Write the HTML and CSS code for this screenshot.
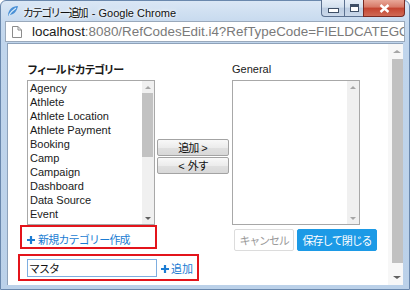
FILE: index.html
```html
<!DOCTYPE html>
<html lang="ja">
<head>
  <meta charset="UTF-8">
  <meta name="viewport" content="width=device-width, initial-scale=1.0">
  <title>カテゴリー追加</title>
  <link rel="stylesheet" href="styles.css">
</head>
<body>
  <div class="window">
    <div class="titlebar">
      <svg class="app-icon" width="13" height="13" viewBox="0 0 13 13">
        <path d="M2 11 C2 5 6 1 12 1 C11 6 8 10 3 10 Z" fill="#4a90d6"/>
        <path d="M3 10 C5 7 7 5 10 3" stroke="#d8ecfb" stroke-width="1.2" fill="none"/>
      </svg>
      <span class="title"><span class="ja title-ja">カテゴリー追加</span> - Google Chrome</span>
      <div class="controls">
        <div class="ctl ctl-min"><span class="glyph-min"></span></div>
        <div class="ctl ctl-max"><span class="glyph-max"></span></div>
        <div class="ctl ctl-close">
          <svg width="11" height="9" viewBox="0 0 11 9">
            <path d="M1.5 1 L9.5 8 M9.5 1 L1.5 8" stroke="#fff" stroke-width="2.4"/>
          </svg>
        </div>
      </div>
    </div>

    <div class="addressbar">
      <svg class="page-icon" width="10" height="12" viewBox="0 0 10 12">
        <path d="M0.5 0.5 H6 L9.5 4 V11.5 H0.5 Z" fill="#fff" stroke="#8c8c8c"/>
        <path d="M6 0.5 V4 H9.5" fill="none" stroke="#8c8c8c"/>
      </svg>
      <span class="url"><span class="host">localhost</span>:8080/RefCodesEdit.i4?RefTypeCode=FIELDCATEGORY</span>
    </div>

    <div class="viewport">
      <div class="page">
        <div class="form-grid">
          <div class="label label-left ja">フィールドカテゴリー</div>
          <div class="label label-right">General</div>

          <div class="listbox list-left">
            <ul class="items">
              <li>Agency</li>
              <li>Athlete</li>
              <li>Athlete Location</li>
              <li>Athlete Payment</li>
              <li>Booking</li>
              <li>Camp</li>
              <li>Campaign</li>
              <li>Dashboard</li>
              <li>Data Source</li>
              <li>Event</li>
            </ul>
            <div class="lscroll">
              <span class="sbtn"><span class="arr arr-up"></span></span>
              <span class="thumb"></span>
              <span class="track"></span>
              <span class="sbtn"><span class="arr arr-down dark"></span></span>
            </div>
          </div>

          <div class="move-buttons">
            <button class="btn-move"><span class="ja">追加</span> &gt;</button>
            <button class="btn-move">&lt; <span class="ja">外す</span></button>
          </div>

          <div class="listbox list-right">
            <ul class="items"></ul>
            <div class="lscroll">
              <span class="sbtn"><span class="arr arr-up"></span></span>
              <span class="track"></span>
              <span class="sbtn"><span class="arr arr-down"></span></span>
            </div>
          </div>

          <div class="new-cat">
            <svg class="plus" width="8" height="8" viewBox="0 0 8 8">
              <path d="M4 0 V8 M0 4 H8" stroke="#1b7cd3" stroke-width="2.2"/>
            </svg>
            <span class="link ja">新規カテゴリー作成</span>
          </div>

          <div class="actions">
            <button class="btn-cancel ja">キャンセル</button>
            <button class="btn-save ja">保存して閉じる</button>
          </div>

          <div class="add-row">
            <input class="cat-input ja" type="text" value="マスタ">
            <svg class="plus" width="8" height="8" viewBox="0 0 8 8">
              <path d="M4 0 V8 M0 4 H8" stroke="#1b7cd3" stroke-width="2.2"/>
            </svg>
            <span class="link ja">追加</span>
          </div>
        </div>
      </div>

      <div class="vscroll">
        <span class="vbtn"><span class="arr arr-up"></span></span>
        <span class="vthumb"></span>
        <span class="vtrack"></span>
        <span class="vbtn"><span class="arr arr-down dark"></span></span>
      </div>
    </div>
  </div>
</body>
</html>
```

FILE: styles.css
```css
body {
  margin: 0;
  width: 410px;
  height: 290px;
  overflow: hidden;
  background-color: #fff;
  font-family: "Liberation Sans", "Noto Sans CJK JP", sans-serif;
  color: #1a1a1a;
}

.ja {
  font-family: "Noto Sans CJK JP", sans-serif;
}

/* window frame */
.window {
  box-sizing: border-box;
  width: 410px;
  height: 290px;
  display: flex;
  flex-direction: column;
  padding: 0 6px 4px 6px;
  border: 1px solid #6a88ad;
  border-radius: 6px 6px 0 0;
  background: linear-gradient(#dae7f5, #c6d9ee 22px, #c0d5ec 44px, #bbd1e9);
}

.titlebar {
  height: 20px;
  display: flex;
  align-items: flex-start;
}

.app-icon {
  margin: 4px 0 0 -1px;
}

.title {
  margin: 4px 0 0 4px;
  font-size: 11px;
  line-height: 14px;
  color: #111;
  text-shadow: 0 0 6px #fff, 0 0 3px #fff;
}

.title-ja {
  font-size: 11px;
  letter-spacing: -1.9px;
  margin-right: 2px;
}

.controls {
  display: flex;
  margin: -1px -2px 0 auto;
  height: 17px;
}

.ctl {
  box-sizing: border-box;
  height: 17px;
  display: flex;
  align-items: center;
  justify-content: center;
  border: 1px solid #5c7190;
  border-top: none;
  background: linear-gradient(#e6eef8, #d4e1ef 45%, #bccde2 50%, #cbd9ea);
}

.ctl-min {
  width: 23px;
  border-radius: 0 0 0 4px;
  border-right: none;
}

.ctl-max {
  width: 19px;
  border-right: none;
}

.ctl-close {
  width: 42px;
  border-radius: 0 0 4px 0;
  border-color: #7a2a22;
  background: linear-gradient(#e9a899, #d77866 45%, #c4432f 50%, #d06a55);
}

.glyph-min {
  width: 9px;
  height: 3px;
  margin-top: 5px;
  background-color: #fff;
  border: 1px solid #3e4f66;
}

.glyph-max {
  box-sizing: border-box;
  width: 9px;
  height: 8px;
  border: 1px solid #3e4f66;
  border-top-width: 3px;
  background-color: #fff;
}

/* address bar */
.addressbar {
  box-sizing: border-box;
  height: 21px;
  margin: 0 -2px;
  display: flex;
  align-items: center;
  border: 1px solid #9aa9bb;
  background-color: #fff;
  overflow: hidden;
  white-space: nowrap;
}

.page-icon {
  margin: 0 10px 0 6px;
  flex-shrink: 0;
}

.url {
  font-size: 13.4px;
  color: #7a7a7a;
}

.host {
  color: #1a1a1a;
}

/* page viewport */
.viewport {
  flex: 1;
  display: flex;
  margin-top: 1px;
  border-top: 1px solid #8ea2ba;
  border-left: 1px solid #8ea2ba;
  background-color: #fff;
  overflow: hidden;
}

.page {
  flex: 1;
  padding: 18px 0 0 10px;
  overflow: hidden;
}

.form-grid {
  display: grid;
  grid-template-columns: 9px 128px 2px 72px 3px 146px;
  grid-template-rows: 18px 145px 29px auto;
}

.label {
  grid-row: 1;
  font-size: 11px;
  line-height: 14px;
}

.label-left {
  grid-column: 2 / 5;
  font-weight: bold;
  letter-spacing: -1.4px;
}

.label-right {
  grid-column: 6;
}

/* list boxes */
.listbox {
  grid-row: 2;
  box-sizing: border-box;
  width: 128px;
  height: 145px;
  display: flex;
  border: 1px solid #a8a8a8;
  background-color: #fff;
}

.list-left {
  grid-column: 2;
}

.list-right {
  grid-column: 6;
}

.items {
  flex: 1;
  list-style: none;
  margin: 0;
  padding: 0;
  overflow: hidden;
}

.items li {
  padding-left: 2px;
  font-size: 11px;
  line-height: 14px;
  white-space: nowrap;
}

.lscroll {
  width: 12px;
  display: flex;
  flex-direction: column;
  background-color: #f0f0f0;
}

.sbtn {
  height: 12px;
  display: flex;
  align-items: center;
  justify-content: center;
}

.thumb {
  height: 64px;
  margin-right: 1px;
  background-color: #c2c2c2;
}

.track {
  flex: 1;
}

.arr {
  width: 0;
  height: 0;
  border-left: 3px solid transparent;
  border-right: 3px solid transparent;
}

.arr-up {
  border-bottom: 3px solid #a6a6a6;
}

.arr-down {
  border-top: 3px solid #a6a6a6;
}

.arr-down.dark {
  border-top-color: #606060;
}

/* move buttons */
.move-buttons {
  grid-column: 4;
  grid-row: 2;
  display: flex;
  flex-direction: column;
  gap: 1px;
  padding-top: 59px;
}

.btn-move {
  height: 17px;
  padding: 0;
  font-family: "Liberation Sans", "Noto Sans CJK JP", sans-serif;
  font-size: 11px;
  line-height: 15px;
  color: #111;
  border: 1px solid #a3a3a3;
  border-radius: 2px;
  background: linear-gradient(#f8f8f8, #ececec 50%, #e0e0e0 51%, #d8d8d8);
}

.btn-move .ja {
  letter-spacing: -1px;
}

/* red boxed rows */
.new-cat {
  grid-column: 1 / 4;
  grid-row: 3;
  align-self: start;
  box-sizing: border-box;
  height: 24px;
  margin-left: 2px;
  padding: 4px 0 0 5px;
  display: flex;
  align-items: center;
  border: 2px solid #e3141b;
}

.plus {
  flex-shrink: 0;
  margin-top: 2px;
}

.link {
  margin-left: 3px;
  font-size: 11px;
  color: #1b7cd3;
  letter-spacing: -0.8px;
}

.add-row {
  grid-column: 1 / 7;
  grid-row: 4;
  box-sizing: border-box;
  width: 181px;
  height: 27px;
  padding: 1px 0 0 7px;
  display: flex;
  align-items: center;
  border: 2px solid #e3141b;
}

.cat-input {
  box-sizing: border-box;
  width: 130px;
  height: 18px;
  margin: 0 4px 0 0;
  padding: 0 1px;
  font-size: 11px;
  letter-spacing: -1px;
  color: #111;
  border: 1px solid #7eaee0;
  outline: none;
}

.add-row .link {
  margin-left: 2px;
  letter-spacing: 0;
}

/* dialog actions */
.actions {
  grid-column: 6;
  grid-row: 3;
  display: flex;
  gap: 3px;
  margin: 4px 0 0 2px;
  align-self: start;
}

.actions button {
  height: 22px;
  padding: 0;
  font-size: 11px;
  border-radius: 2px;
}

.btn-cancel {
  width: 60px;
  color: #9a9a9a;
  letter-spacing: -1.2px;
  background-color: #fff;
  border: 1px solid #dcdcdc;
}

.btn-save {
  width: 80px;
  color: #fff;
  letter-spacing: -1.1px;
  background-color: #1c9ae6;
  border: 1px solid #1c9ae6;
}

/* page scrollbar */
.vscroll {
  width: 15px;
  display: flex;
  flex-direction: column;
  background-color: #f7f7f7;
}

.vbtn {
  height: 15px;
  display: flex;
  align-items: center;
  justify-content: center;
  padding-left: 3px;
}

.vbtn .arr {
  border-left-width: 4px;
  border-right-width: 4px;
}

.vthumb {
  height: 204px;
  margin-left: 4px;
  background-color: #c1c1c1;
}

.vtrack {
  flex: 1;
}
```
